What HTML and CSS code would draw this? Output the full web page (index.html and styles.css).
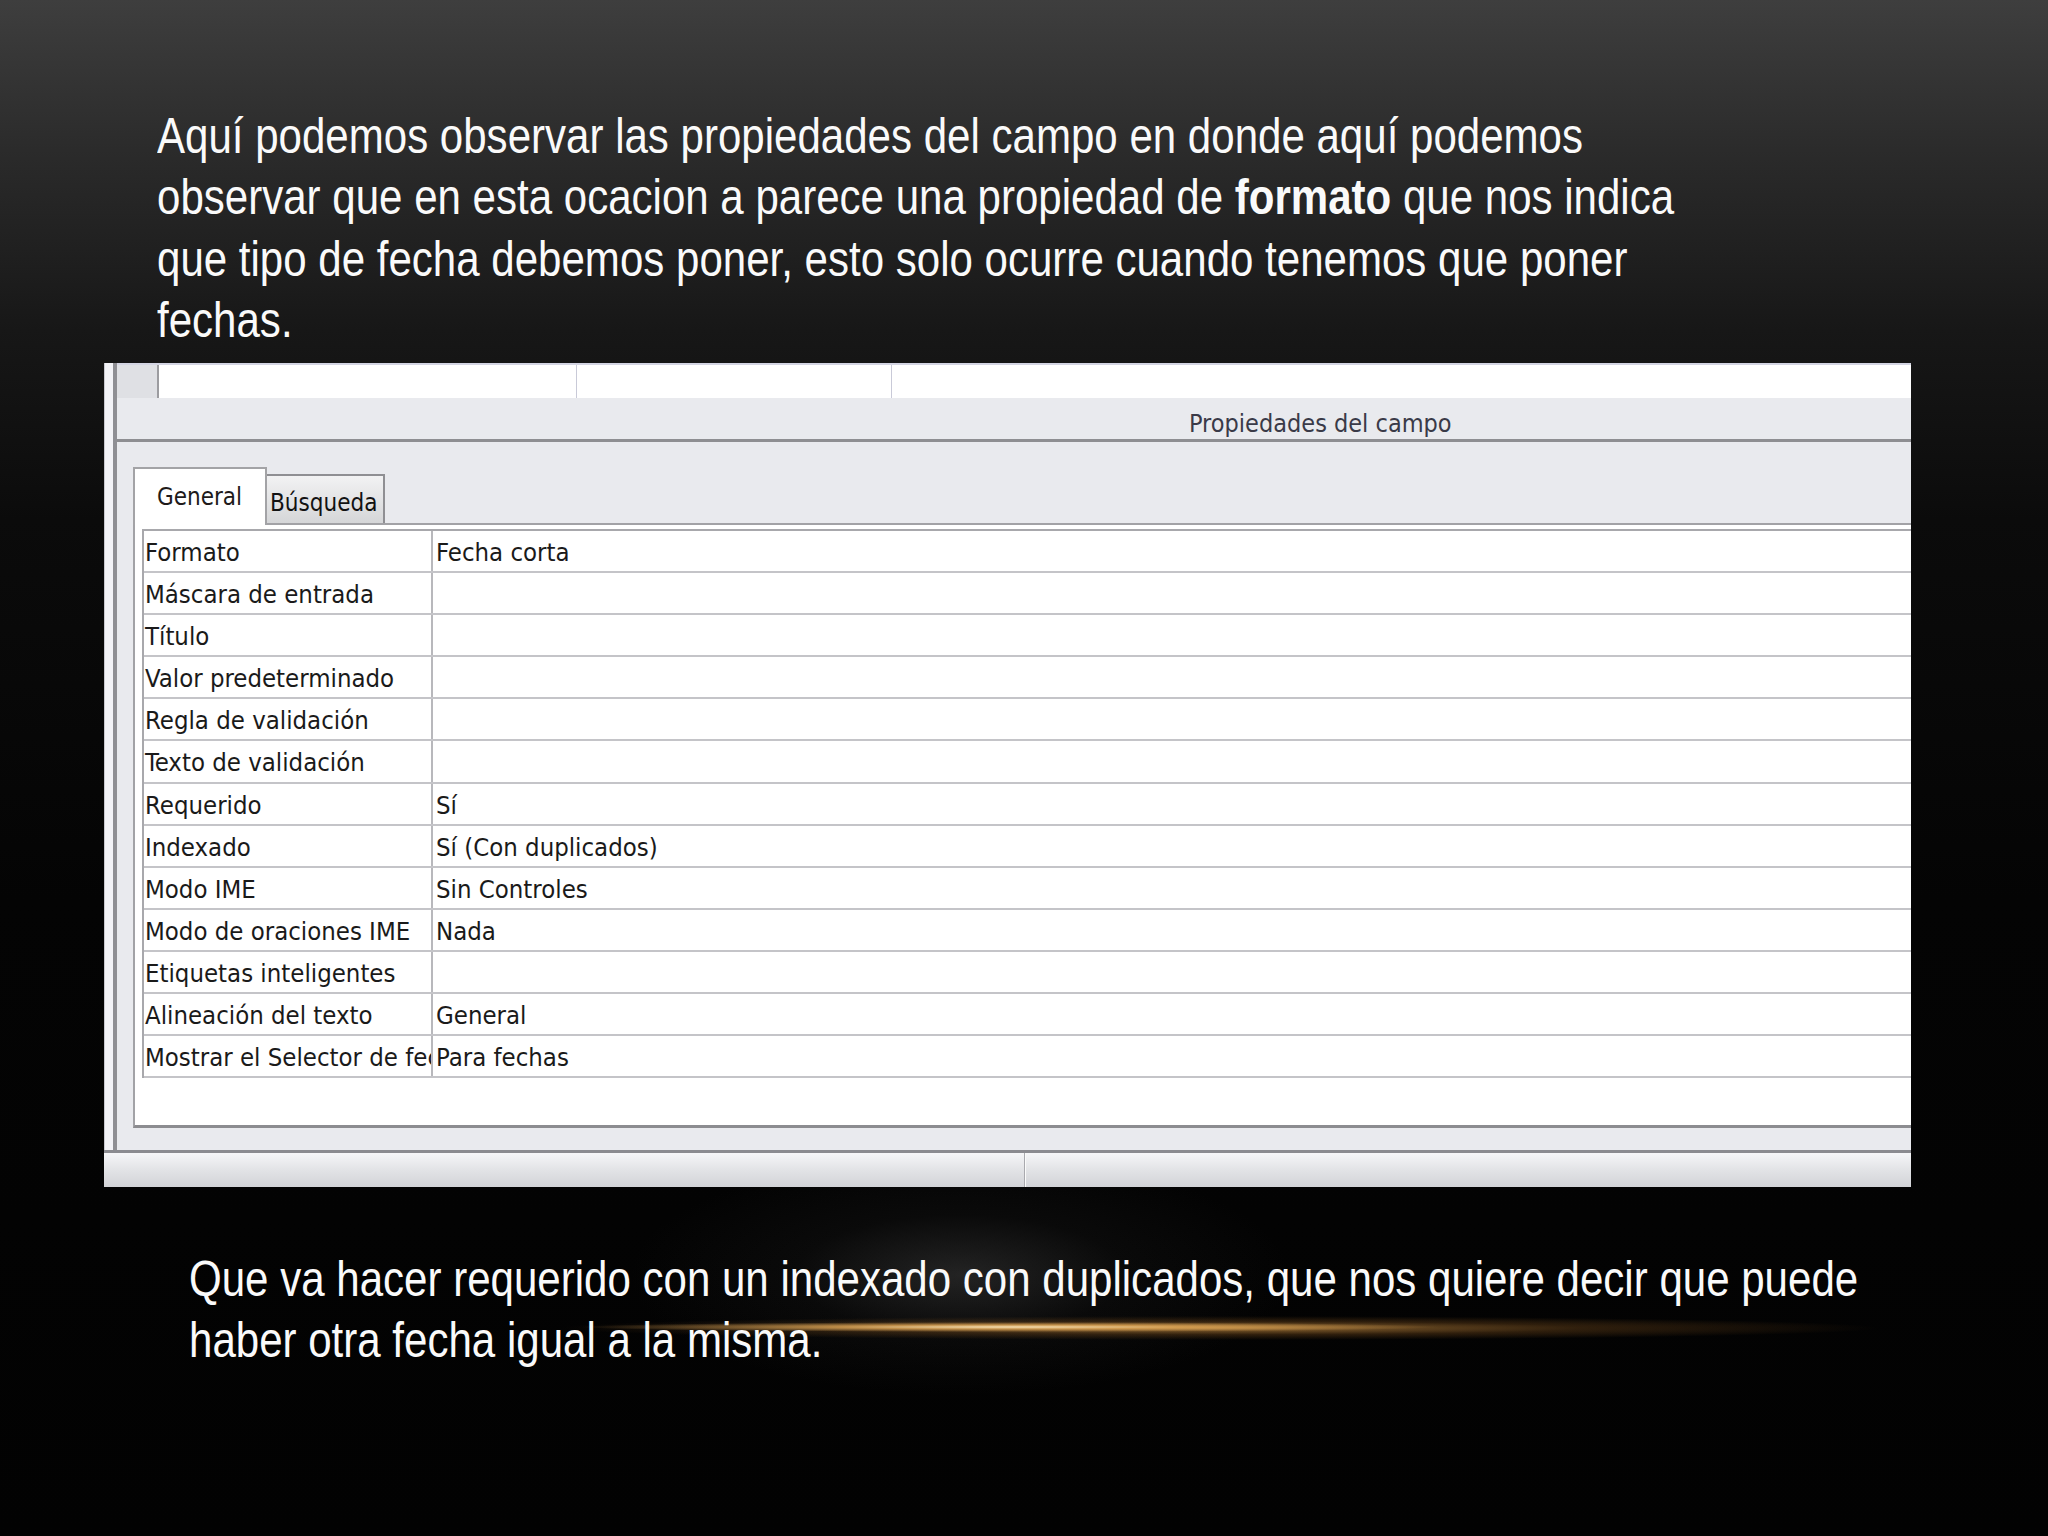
FILE: index.html
```html
<!DOCTYPE html>
<html lang="es">
<head>
<meta charset="utf-8">
<title>Propiedades del campo</title>
<link rel="stylesheet" href="styles.css">
</head>
<body>
<div class="slide">
  <p class="intro"><span class="narrow">Aquí podemos observar las propiedades del campo en donde aquí podemos<br>observar que en esta ocacion a parece una propiedad de <b>formato</b> que nos indica<br>que tipo de fecha debemos poner, esto solo ocurre cuando tenemos que poner<br>fechas.</span></p>

  <div class="shot">
    <div class="shot-body">
      <div class="edge"></div>
      <div class="main">
        <div class="grid-row">
          <div class="sel"></div>
          <div class="gcell c1"></div>
          <div class="gcell c2"></div>
          <div class="gcell c3"></div>
        </div>
        <div class="ph">Propiedades del campo</div>
        <div class="props">
          <div class="tabs">
            <div class="tab active">General</div>
            <div class="tab inactive">Búsqueda</div>
          </div>
          <div class="panel">
            <div class="ptable">
              <div class="row"><div class="k">Formato</div><div class="v">Fecha corta</div></div>
              <div class="row"><div class="k">Máscara de entrada</div><div class="v"></div></div>
              <div class="row"><div class="k">Título</div><div class="v"></div></div>
              <div class="row"><div class="k">Valor predeterminado</div><div class="v"></div></div>
              <div class="row"><div class="k">Regla de validación</div><div class="v"></div></div>
              <div class="row"><div class="k">Texto de validación</div><div class="v"></div></div>
              <div class="row"><div class="k">Requerido</div><div class="v">Sí</div></div>
              <div class="row"><div class="k">Indexado</div><div class="v">Sí (Con duplicados)</div></div>
              <div class="row"><div class="k">Modo IME</div><div class="v">Sin Controles</div></div>
              <div class="row"><div class="k">Modo de oraciones IME</div><div class="v">Nada</div></div>
              <div class="row"><div class="k">Etiquetas inteligentes</div><div class="v"></div></div>
              <div class="row"><div class="k">Alineación del texto</div><div class="v">General</div></div>
              <div class="row"><div class="k">Mostrar el Selector de fecha</div><div class="v">Para fechas</div></div>
            </div>
          </div>
        </div>
      </div>
    </div>
    <div class="status">
      <div class="st1"></div>
      <div class="st2"></div>
    </div>
  </div>

  <p class="note"><span class="narrow">Que va hacer requerido con un indexado con duplicados, que nos quiere decir que puede<br>haber otra fecha igual a la misma.</span></p>
</div>
</body>
</html>
```

FILE: styles.css
```css
html, body {
  margin: 0;
  padding: 0;
  background: #000;
}

.slide {
  width: 2048px;
  height: 1536px;
  overflow: hidden;
  background:
    radial-gradient(ellipse 430px 5px at 1010px 1327px, rgba(255, 232, 185, 0.95) 0%, rgba(235, 175, 90, 0.75) 40%, rgba(170, 110, 40, 0) 100%),
    radial-gradient(ellipse 660px 12px at 1220px 1328px, rgba(210, 150, 70, 0.7) 0%, rgba(150, 95, 35, 0.3) 55%, rgba(100, 60, 20, 0) 100%),
    radial-gradient(ellipse 330px 120px at 960px 1275px, rgba(110, 110, 110, 0.3) 0%, rgba(60, 60, 60, 0.12) 50%, rgba(0, 0, 0, 0) 100%),
    linear-gradient(to bottom, #3e3e3e 0px, #2b2b2b 150px, #171717 330px, #0b0b0b 520px, #040404 900px, #020202 1536px);
}

.intro,
.note {
  margin: 0;
  color: #fafafa;
  font-family: "Liberation Sans", Arial, sans-serif;
  font-size: 50px;
  white-space: nowrap;
}

.narrow {
  display: inline-block;
  transform: scaleX(0.841);
  transform-origin: 0 0;
}

.intro {
  padding: 106px 0 0 157px;
  line-height: 61.4px;
}

.intro b {
  font-weight: bold;
}

.note {
  margin-top: 62px;
  padding-left: 189px;
  line-height: 61px;
}

/* ---------- Access screenshot ---------- */

.shot {
  margin: 11.4px 0 0 104px;
  width: 1807px;
  font-family: "DejaVu Sans Condensed", "DejaVu Sans", sans-serif;
  font-stretch: semi-condensed;
  color: #1a1a1a;
}

.shot-body {
  display: flex;
  height: 787px;
  border-bottom: 3px solid #8b8b90;
}

.edge {
  width: 8px;
  background: #f3f3f7;
  border-left: 1px solid #c9c9cf;
  border-right: 4px solid #8f8f94;
}

.main {
  flex: 1;
  display: flex;
  flex-direction: column;
  background: #e9eaee;
  min-width: 0;
}

.grid-row {
  display: flex;
  height: 33px;
  border-top: 2px solid #d3d4e2;
}

.sel {
  width: 40px;
  background: #dfe0e4;
  border-right: 2px solid #9c9ca0;
}

.gcell {
  background: #fff;
}

.c1 {
  width: 417px;
  border-right: 1px solid #c9cad8;
}

.c2 {
  width: 314px;
  border-right: 1px solid #c9cad8;
}

.c3 {
  flex: 1;
}

.ph {
  box-sizing: border-box;
  height: 44px;
  padding: 13px 0 0 1072px;
  font-size: 25px;
  line-height: 25px;
  color: #3a3a48;
  border-bottom: 3px solid #8e8e92;
  white-space: nowrap;
}

.props {
  flex: 1;
  display: flex;
  flex-direction: column;
  padding: 25px 0 22px 16px;
  min-height: 0;
}

.tabs {
  display: flex;
  align-items: flex-end;
  height: 56px;
}

.tab {
  box-sizing: border-box;
  font-size: 24px;
  line-height: 28px;
  white-space: nowrap;
}

.tab.active {
  position: relative;
  z-index: 1;
  width: 134px;
  height: 58px;
  margin-bottom: -2px;
  padding: 14px 0 0 22px;
  background: #fff;
  border: 2px solid #a3a3a6;
  border-bottom: none;
  color: #201a1a;
}

.tab.inactive {
  width: 118px;
  height: 49px;
  padding: 13px 0 0 3px;
  background: linear-gradient(to bottom, #f2f2f3, #d5d6d8);
  border: 2px solid #8f8f93;
  border-bottom: none;
  border-left: none;
  color: #121212;
}

.panel {
  flex: 1;
  background: #fff;
  border-top: 2px solid #a2a2a6;
  border-left: 2px solid #a2a2a6;
  border-bottom: 3px solid #8c8c90;
  padding: 4px 0 0 7px;
}

.ptable {
  border-top: 2px solid #a8a8ac;
  border-left: 2px solid #a8a8ac;
}

.row {
  box-sizing: border-box;
  display: flex;
  height: 42.1px;
  border-bottom: 2px solid #c4c4c8;
  font-size: 25.5px;
}

.k,
.v {
  padding-top: 3px;
  line-height: 37.1px;
  white-space: nowrap;
  overflow: hidden;
}

.k {
  box-sizing: border-box;
  width: 289px;
  padding-left: 1px;
  border-right: 2px solid #b8b8bc;
}

.v {
  flex: 1;
  padding-left: 3px;
}

.status {
  display: flex;
  height: 34px;
  background: linear-gradient(to bottom, #f6f6f8, #e2e3e6 50%, #d2d3d7);
}

.st1 {
  width: 920px;
  border-right: 1px solid #a9a9ae;
  box-shadow: 1px 0 0 #fafafa;
}

.st2 {
  flex: 1;
}
```
